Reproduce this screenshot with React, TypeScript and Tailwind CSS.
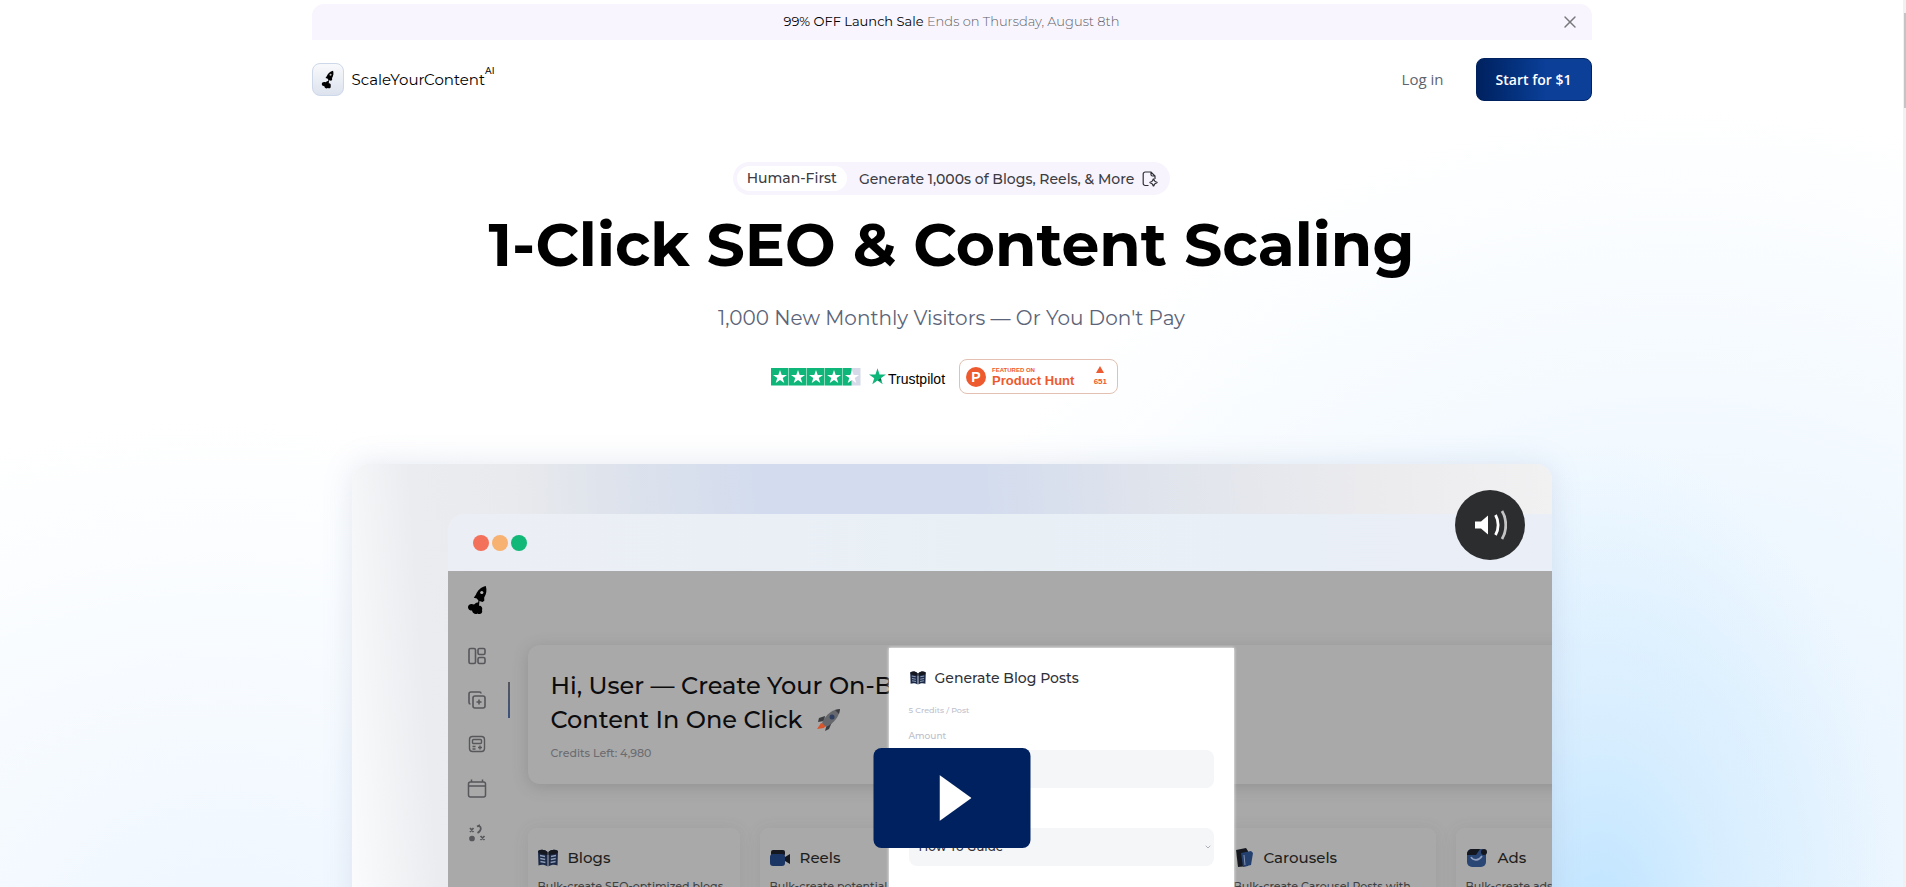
import type { ReactNode } from 'react';
import { ChevronDown, X } from 'lucide-react';

const stars = [0, 1, 2, 3, 4];

const STAR_PATH = 'M9 2l1.7 5h5.3l-4.3 3.1 1.6 5L9 12l-4.3 3.1 1.6-5L2 7h5.3z';

function RocketMark({ className }: { className: string }) {
  return (
    <svg viewBox="0 0 20 30" className={className} aria-hidden="true">
      <path d="M18.8 1C14 2 10.5 5.500 9 9.500L6.800 12.800 9.800 13.500 11.500 15.800 11 17.500C9.500 17 8 18.500 7 19.500 4 18 .8 19.500 1 22.500 1.200 25 3.500 25.500 5 25.500 5.500 28.500 8.500 30 10.500 28.500 13 30 16 28 15 25.200 16 22.500 14 20.500 12 20.800L12.500 16 15.500 17 17.300 15.800 17.200 12.500C19.500 9 20 5 18.800 1Z" fill="#000" />
      <circle cx="14.800" cy="7.500" r="1.600" fill="#b5b5b5" />
    </svg>
  );
}

function BookIcon({ className }: { className: string }) {
  return (
    <svg viewBox="0 0 20 18" className={className} aria-hidden="true">
      <path d="M0 2C3 0 7 .5 9.500 3V17.500C7 15.500 3 15.500 .5 16.500Z" fill="#1c2a48" />
      <path d="M20 2C17 0 13 .5 10.500 3V17.500C13 15.500 17 15.500 19.500 16.500Z" fill="#1c2a48" />
      <path d="M0 2C3 0 7 .5 9.500 3V6L1 4.500ZM20 2C17 0 13 .5 10.500 3V6L19 4.500Z" fill="#15181f" />
      <path d="M2 6.500l5 1M2.200 9.500l5 1M2.400 12.500l5 1M18 6.500l-5 1M17.800 9.500l-5 1M17.600 12.500l-5 1" stroke="#8d9bb4" strokeWidth="1.300" />
    </svg>
  );
}

function ReelIcon() {
  return (
    <svg viewBox="0 0 20 18" className="h-[18px] w-5" aria-hidden="true">
      <rect x="1" y="1" width="14" height="6" rx="2" fill="#15181f" />
      <rect x="0" y="5" width="15" height="12" rx="3" fill="#1b3565" />
      <path d="M15 8l5-3v10l-5-3z" fill="#15181f" />
    </svg>
  );
}

function CarouselIcon() {
  return (
    <svg viewBox="0 0 20 20" className="h-5 w-5" aria-hidden="true">
      <path d="M2 2L12 0 14 3 14 18 4 19Z" fill="#15181f" />
      <path d="M7 5L17 3 19 5 17 17 9 19Z" fill="#24406f" />
      <path d="M10 7l1 10" stroke="#8391ad" />
    </svg>
  );
}

function AdsIcon() {
  return (
    <svg viewBox="0 0 22 20" className="h-5 w-[22px]" aria-hidden="true">
      <rect x="1" y="1" width="19" height="18" rx="5" fill="#2a4675" />
      <path d="M1 6a5 5 0 015-5h8l-4 6H1z" fill="#14171e" />
      <circle cx="18" cy="4" r="3" fill="#14171e" />
      <path d="M5 9c2 4 8 4 11-1" stroke="#8f9fbd" strokeWidth="1.600" fill="none" />
    </svg>
  );
}

function PageSparkIcon() {
  return (
    <svg viewBox="0 0 16 16" className="h-4 w-4" fill="none" stroke="#2f2f35" strokeWidth="1.200" aria-hidden="true">
      <path d="M6.500 14.500H3.200A2 2 0 011.200 12.500V3a2 2 0 012-2H9l4 4v3M9 1v2.500A1.500 1.500 0 0010.500 5H13" />
      <path d="M11.500 7.500c.5 2.700 1.300 3.500 4 4-2.700.5-3.500 1.300-4 4-.5-2.700-1.300-3.500-4-4 2.700-.5 3.500-1.300 4-4z" />
    </svg>
  );
}

function Banner() {
  return (
    <div className="relative flex h-9 items-center justify-center rounded-t-xl bg-[#f8f5fe] text-[13px]">
      <p className="font-light text-[#5f5f64]">
        <span className="font-normal text-black">99% OFF Launch Sale</span> Ends on Thursday, August 8th
      </p>
      <button type="button" aria-label="Close" className="absolute right-3 text-[#77777c]">
        <X size={20} strokeWidth={1.7} />
      </button>
    </div>
  );
}

function Header() {
  return (
    <header className="mt-[18px] flex h-[43px] items-center justify-between">
      <a href="#" className="flex items-center gap-2 text-black">
        <span className="flex h-[33px] w-8 items-center justify-center rounded-lg border border-[#cdd8ea] bg-linear-to-b from-[#f8f9fb] to-[#dde3ee]">
          <RocketMark className="h-[19px] w-[13px]" />
        </span>
        <span className="flex items-start pt-0.5 text-[15px]">
          ScaleYourContent
          <span className="-mt-1 text-[9px] leading-3 font-medium">AI</span>
        </span>
      </a>
      <nav className="flex items-center gap-8">
        <a href="#" className="font-['Open_Sans',sans-serif] text-[15px] text-[#5f646c]">Log in</a>
        <button
          type="button"
          className="h-[43px] w-[116px] rounded-lg border border-[#00215f] bg-linear-to-r from-[#00215f] to-[#0b3f98] to-60% font-['Open_Sans',sans-serif] text-sm font-semibold text-white"
        >
          Start for $1
        </button>
      </nav>
    </header>
  );
}

function Trustpilot() {
  return (
    <a href="#" className="flex items-center gap-2" aria-label="Trustpilot">
      <span className="flex">
        {stars.map((i) => (
          <svg key={i} viewBox="0 0 18 18" className="h-[18px] w-[18px]" aria-hidden="true">
            <path d="M0 0h17.500v17.500H0z" fill={i === 4 ? '#d5d9e8' : '#0fb67a'} />
            {i === 4 && <path d="M0 0h8.500v17.500H0z" fill="#0fb67a" />}
            <path d={STAR_PATH} fill="#fff" />
          </svg>
        ))}
      </span>
      <span className="flex items-center font-['Liberation_Sans',sans-serif] text-sm text-black">
        <svg viewBox="2 2 14 13.500" className="mr-0.5 h-[17px] w-[17px]" aria-hidden="true">
          <path d={STAR_PATH} fill="#0fb67a" />
          <path d="M11.700 10.100l.6 2L9 12z" fill="#0a5f43" />
        </svg>
        <span className="pt-1">Trustpilot</span>
      </span>
    </a>
  );
}

function ProductHunt() {
  return (
    <a href="#" className="flex h-[35px] w-[159px] items-center rounded-lg border border-[#e3c0b2] bg-white pr-2.5 pl-1.5 text-left font-['Liberation_Sans',sans-serif] font-bold text-[#ee5a2f]">
      <span className="flex h-5 w-5 items-center justify-center rounded-full bg-[#ee5a2f] text-sm text-white">P</span>
      <span className="ml-1.5 flex flex-1 flex-col">
        <span className="text-[6px] leading-[8px]">FEATURED ON</span>
        <span className="text-[13px] leading-[14px] whitespace-nowrap">Product Hunt</span>
      </span>
      <span className="flex flex-col items-center">
        <svg viewBox="0 0 8 7" className="h-[7px] w-2" aria-hidden="true">
          <path d="M4 0l4 7H0z" fill="#ee5a2f" />
        </svg>
        <span className="mt-1 text-[8px] leading-[10px]">651</span>
      </span>
    </a>
  );
}

function Hero() {
  return (
    <section className="mt-[61px] flex flex-col items-center text-center">
      <a href="#" className="flex h-[33px] items-center rounded-full bg-[#f7f4fe] pr-3 pl-1 text-sm font-medium text-[#3c3c42]">
        <span className="rounded-full bg-white px-2.5 leading-[25px]">Human-First</span>
        <span className="mr-2 ml-3">Generate 1,000s of Blogs, Reels, &amp; More</span>
        <PageSparkIcon />
      </a>
      <h1 className="mt-[15px] text-6xl leading-[70px] font-bold text-black">1-Click SEO &amp; Content Scaling</h1>
      <p className="mt-6 text-xl leading-7 text-[#5b6478]">1,000 New Monthly Visitors — Or You Don't Pay</p>
      <div className="mt-[27px] mr-3.5 flex items-center gap-3.5">
        <Trustpilot />
        <ProductHunt />
      </div>
    </section>
  );
}

function Sidebar() {
  return (
    <div className="flex w-[62px] shrink-0 flex-col items-center pt-3.5 pr-1 text-[#57575c]">
      <RocketMark className="h-[30px] w-5" />
      <div className="mt-8 flex flex-col items-center gap-[26px]">
        <svg viewBox="0 0 18 18" className="h-[18px] w-[18px]" fill="none" stroke="currentColor" strokeWidth="1.600" aria-hidden="true">
          <rect x="1" y="1.500" width="6.500" height="15" rx="1.500" />
          <rect x="10" y="1.500" width="7" height="6" rx="1.500" />
          <rect x="10" y="10.500" width="7" height="6" rx="1.500" />
        </svg>
        <svg viewBox="0 0 18 18" className="h-[18px] w-[18px]" fill="none" stroke="currentColor" strokeWidth="1.600" aria-hidden="true">
          <rect x="5" y="5" width="12" height="12" rx="2" />
          <path d="M2.500 13A1.500 1.500 0 011 11.500V3a2 2 0 012-2h8.500A1.500 1.500 0 0113 2.500M11 8.500v5M8.500 11h5" />
        </svg>
        <svg viewBox="0 0 18 18" className="h-[18px] w-[18px]" fill="none" stroke="currentColor" strokeWidth="1.400" aria-hidden="true">
          <rect x="1.500" y="1.500" width="15" height="15" rx="3" />
          <rect x="4.500" y="4.500" width="9" height="4" rx="1" />
          <path d="M4.500 11.500h3M4.500 14h3M12 10.500v4M10 12.500h4" />
        </svg>
        <svg viewBox="0 0 20 19" className="h-[19px] w-5" fill="none" stroke="currentColor" strokeWidth="1.500" aria-hidden="true">
          <rect x="1.500" y="3" width="17" height="15" rx="2" />
          <path d="M1.500 7h17M4.500 .5V3M15.500 .5V3" />
        </svg>
        <svg viewBox="0 0 18 18" className="h-[18px] w-[18px]" fill="none" stroke="currentColor" strokeWidth="1.700" aria-hidden="true">
          <path d="M2 4l3.500 4M5.500 4L2 8M12.500 12l4 4M16.500 12l-4 4M9 2.500c5-1.500 5 4 .5 6.500M9 2.500L12 1" />
          <circle cx="4" cy="14.500" r="2" fill="currentColor" />
        </svg>
      </div>
    </div>
  );
}

interface ToolCardProps {
  icon: ReactNode;
  title: string;
  text: string;
}

function ToolCard({ icon, title, text }: ToolCardProps) {
  return (
    <div className="h-[200px] w-[212px] shrink-0 overflow-hidden rounded-lg bg-[#a9a9a9] px-2.5 pt-[18px] shadow-[0_2px_16px_rgba(80,80,80,0.12)]">
      <h3 className="flex items-center gap-2.5 text-[15px] leading-6 font-medium text-[#1e1e20]">
        {icon}
        {title}
      </h3>
      <p className="mt-2 text-[11px] leading-4 font-medium whitespace-nowrap text-[#3f3f42]">{text}</p>
    </div>
  );
}

function GenerateDialog() {
  return (
    <div className="absolute top-[77px] left-[441px] h-[400px] w-[345px] bg-white px-5 pt-[18px] shadow-[0_0_3px_#fff]">
      <h3 className="flex items-center gap-2 text-sm leading-6 font-medium text-[#303238]">
        <BookIcon className="h-3.5 w-[18px]" />
        Generate Blog Posts
      </h3>
      <p className="mt-3 text-[8px] leading-4 font-medium text-[#bcc0cc]">5 Credits / Post</p>
      <label htmlFor="amount" className="mt-2.5 block text-[9px] leading-4 font-medium text-[#bcc0cc]">Amount</label>
      <input id="amount" className="mt-1.5 block h-[38px] w-full rounded-lg bg-[#f5f6f8]" />
      <div className="relative mt-10">
        <select aria-label="Format" className="block h-[38px] w-full appearance-none rounded-lg bg-[#f5f6f8] px-2.5 text-xs font-medium text-[#303238]">
          <option>How To Guide</option>
        </select>
        <ChevronDown size={8} className="absolute top-[15px] right-0.5 text-[#8a8d95]" />
      </div>
    </div>
  );
}

function AppWindow() {
  return (
    <div className="mt-[50px] ml-24">
      <div className="flex h-[57px] items-center gap-[3px] rounded-tl-2xl bg-linear-to-r from-[#eceef5] via-[#e8f0f6] to-[#eaeef7] pl-[25px]">
        <span className="h-4 w-4 rounded-full bg-[#f3705a]" />
        <span className="h-4 w-4 rounded-full bg-[#f7b171]" />
        <span className="h-4 w-4 rounded-full bg-[#12b878]" />
      </div>
      <div className="relative flex h-[500px] overflow-hidden bg-[#a8a9a8]">
        <Sidebar />
        <div className="mt-[111px] -ml-0.5 h-9 w-0.5 shrink-0 bg-linear-to-b from-[#55565c] to-[#3b527f]" />
        <div className="ml-[18px] flex-1 pt-[74px]">
          <div className="h-[139px] rounded-l-xl bg-[#a9a9a9] pt-6 pl-[23px] shadow-[0_3px_16px_rgba(70,70,70,0.22)]">
            <h2 className="text-2xl leading-[34px] font-medium whitespace-nowrap text-[#0c0c0e]">
              Hi, User — Create Your On-B
              <br />
              <span className="flex items-center gap-3.5">
                Content In One Click
                <svg viewBox="0 0 24 22" className="h-[22px] w-6" aria-hidden="true">
                  <path d="M5 14L1 20l7-1 3-4z" fill="#d9552b" />
                  <path d="M9 7L3 9l-1 4 6-1zM16 13l-3 7-4 2 2-7z" fill="#3b3c40" />
                  <path d="M24 0C17 0 10 5 6 14l4 4C18 14 23 8 24 0z" fill="#66686e" />
                  <path d="M24 0l-5 1 4 4z" fill="#3b3c40" />
                  <circle cx="16" cy="8" r="2.500" fill="#2c3d60" />
                </svg>
              </span>
            </h2>
            <p className="mt-1.5 text-[11px] leading-5 font-medium text-[#6b6b70]">Credits Left: 4,980</p>
          </div>
          <div className="mt-11 flex gap-5">
            <ToolCard icon={<BookIcon className="h-[18px] w-5" />} title="Blogs" text="Bulk-create SEO-optimized blogs" />
            <ToolCard icon={<ReelIcon />} title="Reels" text="Bulk-create potential" />
            <div className="w-[212px] shrink-0" />
            <ToolCard icon={<CarouselIcon />} title="Carousels" text="Bulk-create Carousel Posts with" />
            <ToolCard icon={<AdsIcon />} title="Ads" text="Bulk-create ads" />
          </div>
        </div>
        <GenerateDialog />
      </div>
    </div>
  );
}

function VideoPreview() {
  return (
    <section className="relative mx-auto mt-[70px] max-w-[1200px] rounded-2xl shadow-[0_0_30px_rgba(110,130,170,0.18)]">
      <div className="overflow-hidden rounded-2xl bg-[linear-gradient(86deg,#fdfdfe_0%,#f6f7f9_3%,#ebecef_8%,#e9eaed_16%,#dee3ec_24%,#d3dcee_36%,#d3dcee_54%,#e0e4ec_68%,#ebebee_85%,#f1f1f2_100%)]">
        <AppWindow />
      </div>
      <button type="button" aria-label="Mute" className="absolute top-[26px] right-[27px] flex h-[70px] w-[70px] items-center justify-center rounded-full bg-[#2c2d2f]">
        <svg viewBox="0 0 34 30" className="h-[30px] w-[34px]" fill="none" aria-hidden="true">
          <path d="M2 11.500h6l7-6v19l-7-6H2z" fill="#fff" />
          <path d="M22.500 5c3.500 6 3.500 14 0 20" stroke="#fff" strokeWidth="2.800" />
          <path d="M29 1c5 8 5 20 0 28" stroke="#c4c4c5" strokeWidth="2.800" />
        </svg>
      </button>
      <button type="button" aria-label="Play video" className="absolute top-[284px] left-1/2 flex h-[100px] w-[157px] -translate-x-1/2 items-center justify-center rounded-lg bg-[#00215f]">
        <svg viewBox="0 0 32 46" className="ml-2 h-[46px] w-8" aria-hidden="true">
          <path d="M0 0l32 23L0 46z" fill="#fff" />
        </svg>
      </button>
    </section>
  );
}

export default function App() {
  return (
    <div className="flex h-screen overflow-hidden bg-white bg-[radial-gradient(ellipse_300px_480px_at_84%_104%,#bfe4ff_0%,#d3ecffcc_40%,transparent_100%),radial-gradient(ellipse_800px_740px_at_88%_95%,#e6f3fe_0%,#f2f9ff_55%,transparent_100%),radial-gradient(ellipse_700px_520px_at_12%_105%,#eef6ff_0%,#f7fbff_50%,transparent_100%)] font-[Montserrat,Inter,sans-serif]">
      <div className="flex-1">
        <main className="mx-auto max-w-7xl pt-1">
          <Banner />
          <Header />
          <Hero />
          <VideoPreview />
        </main>
      </div>
      <div className="w-[3px] bg-[#f1f1f2]">
        <div className="mt-[13px] ml-auto h-[95px] w-0.5 bg-[#c4c4c6]" />
      </div>
    </div>
  );
}
